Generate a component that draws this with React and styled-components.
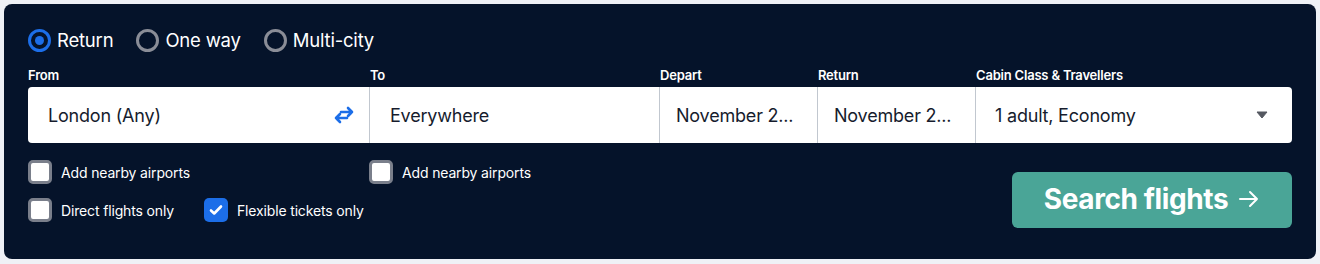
import React from "react";
import styled, { createGlobalStyle } from "styled-components";

const Global = createGlobalStyle`
  html, body { margin: 0; padding: 0; background: #eff1f6; }
  body { font-family: Inter, "Noto Sans", sans-serif; -webkit-font-smoothing: antialiased; }
  * { box-sizing: border-box; }
`;

const Page = styled.div`
  padding: 4px;
  width: 1320px;
  height: 264px;
`;

const Panel = styled.div`
  width: 1312px;
  height: 255px;
  background: #05132a;
  border-radius: 8px;
  padding: 24px 24px 0 24px;
  display: flex;
  flex-direction: column;
`;

const RadioRow = styled.div`
  display: flex;
  align-items: center;
  gap: 23px;
  height: 24px;
`;

const RadioItem = styled.label`
  display: flex;
  align-items: center;
  gap: 6px;
  color: #ffffff;
  font-size: 18.5px;
  letter-spacing: -0.2px;
`;

const RadioCircle = styled.span`
  width: 23px;
  height: 23px;
  border-radius: 50%;
  border: 3px solid ${(p) => (p.$checked ? "#1c6ee8" : "#8a8d97")};
  display: flex;
  align-items: center;
  justify-content: center;
  background: transparent;
  &::after {
    content: "";
    width: 9px;
    height: 9px;
    border-radius: 50%;
    background: ${(p) => (p.$checked ? "#1c6ee8" : "transparent")};
  }
`;

const Fields = styled.div`
  margin-top: 16px;
  display: grid;
  grid-template-columns: 341px 290px 158px 158px 1fr;
  grid-template-rows: auto 56px;
`;

const Label = styled.div`
  color: #ffffff;
  font-size: 13px;
  font-weight: 600;
  letter-spacing: -0.2px;
  height: 19px;
  line-height: 14px;
  padding-left: ${(p) => (p.$first ? "0" : "1px")};
  grid-row: 1;
`;

const Box = styled.div`
  grid-row: 2;
  background: #ffffff;
  display: flex;
  align-items: center;
  justify-content: space-between;
  padding: 0 ${(p) => p.$pr || "16px"} 0 ${(p) => p.$pl || "16px"};
  border-left: ${(p) => (p.$first ? "none" : "1px solid #c1c7cf")};
  border-radius: ${(p) => p.$radius || "0"};
  color: #161c2d;
  font-size: 18px;
  letter-spacing: -0.2px;
  white-space: nowrap;
  overflow: hidden;
`;

const Bottom = styled.div`
  display: flex;
  justify-content: space-between;
  margin-top: 17px;
`;

const Options = styled.div`
  display: flex;
  flex-direction: column;
  gap: 14px;
`;

const OptionRowGrid = styled.div`
  display: grid;
  grid-template-columns: 341px auto;
`;

const OptionRowFlex = styled.div`
  display: flex;
  gap: 30px;
`;

const Check = styled.label`
  display: flex;
  align-items: center;
  gap: 9px;
  color: #ffffff;
  font-size: 14px;
  letter-spacing: -0.15px;
  height: 24px;
`;

const CheckBox = styled.span`
  width: 24px;
  height: 24px;
  border-radius: 5px;
  border: ${(p) => (p.$checked ? "none" : "3px solid #7a7f8b")};
  background: ${(p) => (p.$checked ? "#1c6ee8" : "#ffffff")};
  display: flex;
  align-items: center;
  justify-content: center;
`;

const SearchButton = styled.button`
  margin-top: 12px;
  width: 280px;
  height: 56px;
  border: none;
  border-radius: 6px;
  background: #4aa597;
  color: #ffffff;
  font-family: Inter, "Noto Sans", sans-serif;
  font-size: 28px;
  font-weight: 700;
  letter-spacing: -0.4px;
  display: flex;
  align-items: center;
  justify-content: center;
  gap: 10px;
  padding: 0 0 2px 0;
`;

const SwapIcon = () => (
  <svg width="22" height="22" viewBox="0 0 22 22" fill="none" stroke="#1c6ee8" strokeWidth="2.6" strokeLinecap="round" strokeLinejoin="round">
    <path d="M8 8h11M15 4l4 4-4 4" />
    <path d="M14 14H3M7 10l-4 4 4 4" />
  </svg>
);

const Caret = () => (
  <svg width="12" height="8" viewBox="0 0 12 8">
    <path d="M1 1h10L6 7z" fill="#545860" stroke="#545860" strokeWidth="1" strokeLinejoin="round" />
  </svg>
);

const Tick = () => (
  <svg width="16" height="16" viewBox="0 0 16 16" fill="none" stroke="#ffffff" strokeWidth="2.6" strokeLinecap="round" strokeLinejoin="round">
    <path d="M3 8.5l3.2 3L13 4.5" />
  </svg>
);

const Arrow = () => (
  <svg width="22" height="22" viewBox="0 0 22 22" fill="none" stroke="#ffffff" strokeWidth="2" strokeLinecap="round" strokeLinejoin="round">
    <path d="M2 11h17M12 4l7 7-7 7" />
  </svg>
);

export default function App() {
  return (
    <>
      <Global />
      <Page>
        <Panel>
          <RadioRow>
            <RadioItem><RadioCircle $checked />Return</RadioItem>
            <RadioItem><RadioCircle />One way</RadioItem>
            <RadioItem><RadioCircle />Multi-city</RadioItem>
          </RadioRow>
          <Fields>
            <Label $first>From</Label>
            <Label>To</Label>
            <Label>Depart</Label>
            <Label>Return</Label>
            <Label>Cabin Class &amp; Travellers</Label>
            <Box $first $pl="20px" $pr="14px" $radius="4px 0 0 4px">
              London (Any)
              <SwapIcon />
            </Box>
            <Box $pl="20px">Everywhere</Box>
            <Box>November 2...</Box>
            <Box>November 2...</Box>
            <Box $pl="19px" $pr="24px" $radius="0 4px 4px 0">
              1 adult, Economy
              <Caret />
            </Box>
          </Fields>
          <Bottom>
            <Options>
              <OptionRowGrid>
                <Check><CheckBox />Add nearby airports</Check>
                <Check><CheckBox />Add nearby airports</Check>
              </OptionRowGrid>
              <OptionRowFlex>
                <Check><CheckBox />Direct flights only</Check>
                <Check><CheckBox $checked><Tick /></CheckBox>Flexible tickets only</Check>
              </OptionRowFlex>
            </Options>
            <SearchButton>
              Search flights
              <Arrow />
            </SearchButton>
          </Bottom>
        </Panel>
      </Page>
    </>
  );
}
